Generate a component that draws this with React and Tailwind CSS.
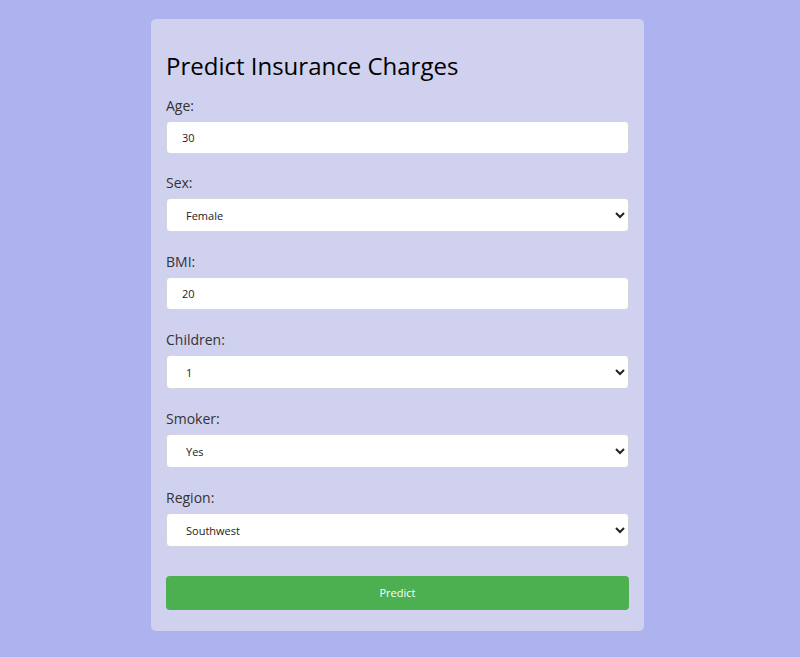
import React, { useState } from 'react';

const fieldBase =
  'block w-full px-[15px] bg-white border border-[#d4d4dc] rounded-[4px] text-[11px] text-[#222] outline-none';
const inputClass = `${fieldBase} h-[33px]`;
const selectClass = `${fieldBase} h-[34px]`;

const Label = ({ children }) => (
  <label className="block text-[14px] leading-[20px] text-[#333] mb-[5px]">{children}</label>
);

export default function App() {
  const [form, setForm] = useState({
    age: '30',
    sex: 'female',
    bmi: '20',
    children: '1',
    smoker: 'yes',
    region: 'southwest',
  });

  const set = (k) => (e) => setForm({ ...form, [k]: e.target.value });

  return (
    <div
      className="min-h-[657px] bg-[#adb3ee] pt-[19px] pb-[26px]"
      style={{ fontFamily: '"Open Sans", "Liberation Sans", sans-serif' }}
    >
      <div className="w-[493px] ml-[151px] bg-[#cfd1ef] rounded-[5px] px-[15px] pt-[29px] pb-[21px]">
        <h1 className="text-[24px] leading-[36px] font-medium text-black mb-[12px]">Predict Insurance Charges</h1>

        <div className="mb-[19px]">
          <Label>Age:</Label>
          <input className={inputClass} value={form.age} onChange={set('age')} />
        </div>

        <div className="mb-[20px]">
          <Label>Sex:</Label>
          <select className={selectClass} value={form.sex} onChange={set('sex')}>
            <option value="female">Female</option>
            <option value="male">Male</option>
          </select>
        </div>

        <div className="mb-[20px]">
          <Label>BMI:</Label>
          <input className={inputClass} value={form.bmi} onChange={set('bmi')} />
        </div>

        <div className="mb-[20px]">
          <Label>Children:</Label>
          <select className={selectClass} value={form.children} onChange={set('children')}>
            <option value="0">0</option>
            <option value="1">1</option>
            <option value="2">2</option>
            <option value="3">3</option>
          </select>
        </div>

        <div className="mb-[20px]">
          <Label>Smoker:</Label>
          <select className={selectClass} value={form.smoker} onChange={set('smoker')}>
            <option value="yes">Yes</option>
            <option value="no">No</option>
          </select>
        </div>

        <div className="mb-[29px]">
          <Label>Region:</Label>
          <select className={selectClass} value={form.region} onChange={set('region')}>
            <option value="southwest">Southwest</option>
            <option value="southeast">Southeast</option>
            <option value="northwest">Northwest</option>
            <option value="northeast">Northeast</option>
          </select>
        </div>

        <button className="block w-full h-[34px] rounded-[4px] bg-[#4caf50] text-white text-[11px]">
          Predict
        </button>
      </div>
    </div>
  );
}
